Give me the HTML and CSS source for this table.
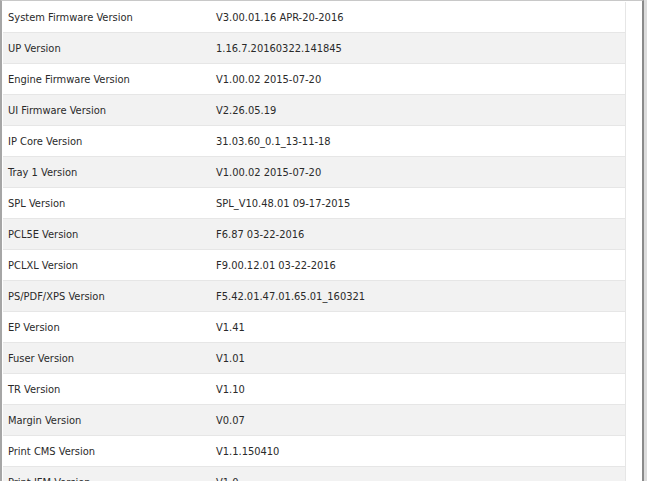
FILE: index.html
```html
<!DOCTYPE html>
<html>
<head>
<meta charset="utf-8">
<link rel="stylesheet" href="styles.css">
</head>
<body>
<div class="frame">
  <div class="scroll">
    <table class="info">
      <tbody>
        <tr><td class="label">System Firmware Version</td><td class="value">V3.00.01.16 APR-20-2016</td></tr>
        <tr><td class="label">UP Version</td><td class="value">1.16.7.20160322.141845</td></tr>
        <tr><td class="label">Engine Firmware Version</td><td class="value">V1.00.02 2015-07-20</td></tr>
        <tr><td class="label">UI Firmware Version</td><td class="value">V2.26.05.19</td></tr>
        <tr><td class="label">IP Core Version</td><td class="value">31.03.60_0.1_13-11-18</td></tr>
        <tr><td class="label">Tray 1 Version</td><td class="value">V1.00.02 2015-07-20</td></tr>
        <tr><td class="label">SPL Version</td><td class="value">SPL_V10.48.01 09-17-2015</td></tr>
        <tr><td class="label">PCL5E Version</td><td class="value">F6.87 03-22-2016</td></tr>
        <tr><td class="label">PCLXL Version</td><td class="value">F9.00.12.01 03-22-2016</td></tr>
        <tr><td class="label">PS/PDF/XPS Version</td><td class="value">F5.42.01.47.01.65.01_160321</td></tr>
        <tr><td class="label">EP Version</td><td class="value">V1.41</td></tr>
        <tr><td class="label">Fuser Version</td><td class="value">V1.01</td></tr>
        <tr><td class="label">TR Version</td><td class="value">V1.10</td></tr>
        <tr><td class="label">Margin Version</td><td class="value">V0.07</td></tr>
        <tr><td class="label">Print CMS Version</td><td class="value">V1.1.150410</td></tr>
        <tr><td class="label">Print IFM Version</td><td class="value">V1.0</td></tr>
      </tbody>
    </table>
  </div>
</div>
</body>
</html>
```
FILE: styles.css
```css
html, body {
  margin: 0;
  padding: 0;
  background: #dcdcdc;
  overflow: hidden;
}
.frame {
  width: 644px;
  height: 481px;
  box-sizing: border-box;
  border-top: 1px solid #c8c8c8;
  border-left: 2px solid #a6a6a6;
  border-right: 2px solid #8a8a8a;
  background: #ffffff;
  overflow: hidden;
}
.scroll {
  padding: 1px 0 0 1px;
}
.info {
  width: 623px;
  border-collapse: collapse;
  font-family: "DejaVu Sans Condensed", "DejaVu Sans", "Liberation Sans", sans-serif;
  font-size: 11px;
  color: #2a2a2a;
}
.info tr:nth-child(even) td {
  background: #f2f2f2;
}
.info td {
  height: 30px;
  padding: 0;
  border-bottom: 1px solid #e6e6e6;
  vertical-align: middle;
  white-space: nowrap;
}
.info .label {
  width: 203px;
  padding-left: 5px;
}
.info .value {
  padding-left: 5px;
  border-right: 1px solid #e6e6e6;
}
```
